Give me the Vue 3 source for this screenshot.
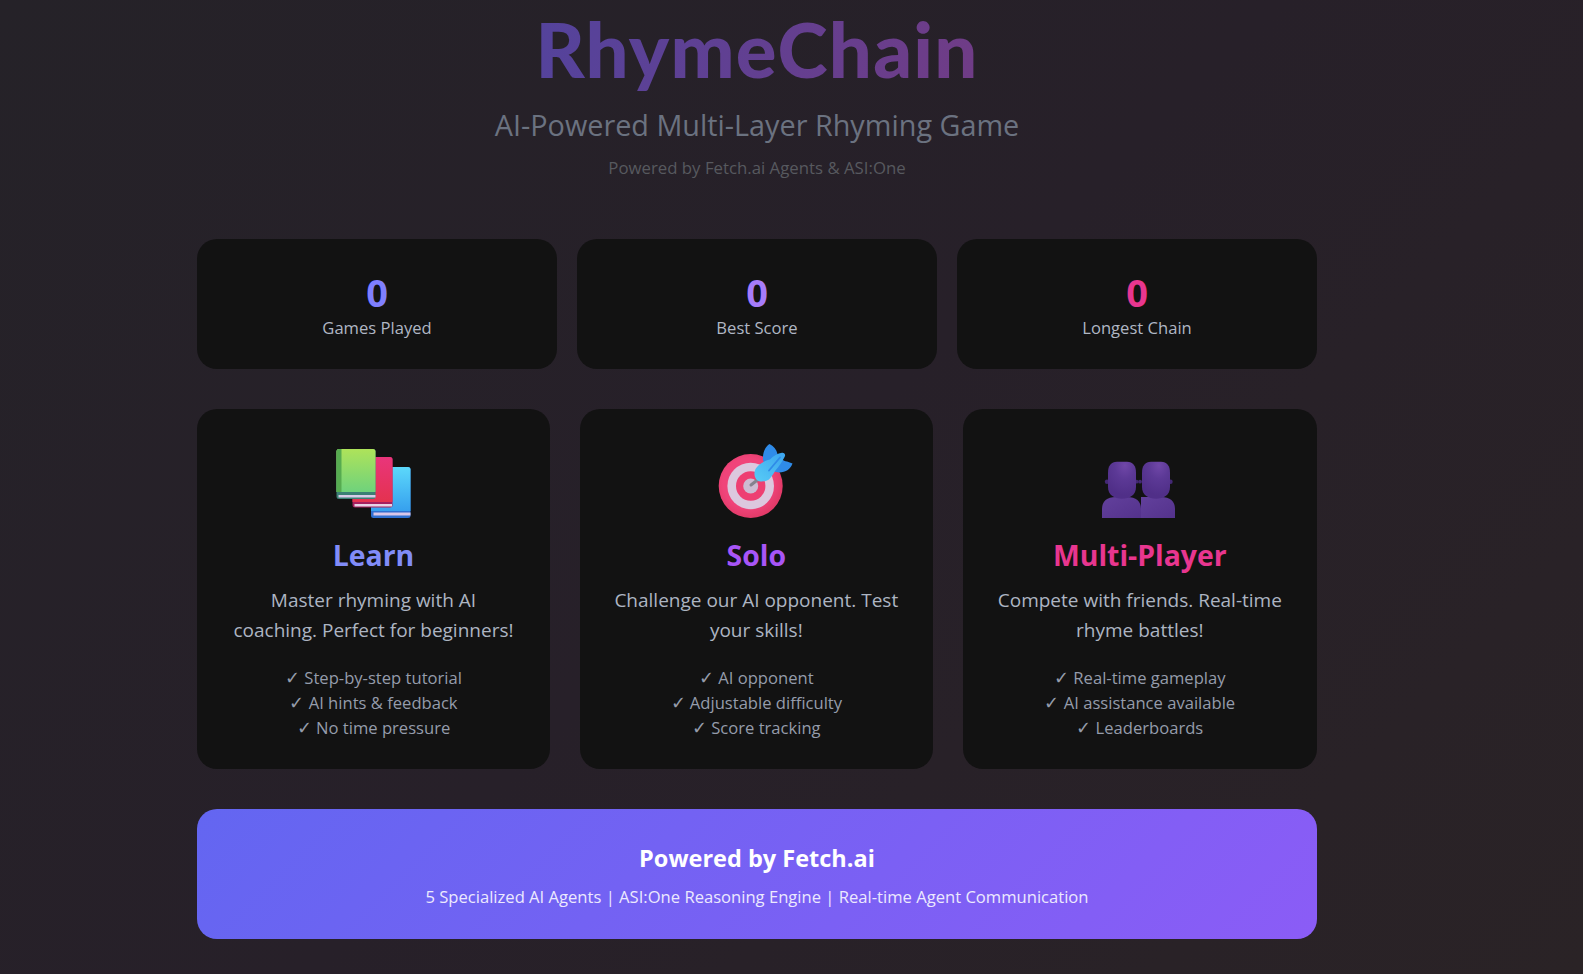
<template>
  <div class="page">
    <header class="hero">
      <h1 class="logo">RhymeChain</h1>
      <p class="tagline">AI-Powered Multi-Layer Rhyming Game</p>
      <p class="powered">Powered by Fetch.ai Agents &amp; ASI:One</p>
    </header>

    <section class="stats">
      <div v-for="stat in stats" :key="stat.label" class="stat-card">
        <div class="stat-value" :class="stat.color">0</div>
        <div class="stat-label">{{ stat.label }}</div>
      </div>
    </section>

    <section class="modes">
      <article class="mode-card">
        <svg class="mode-icon" viewBox="0 0 80 80">
          <defs>
            <linearGradient id="bookGreen" x1="0" y1="0" x2="0" y2="1">
              <stop offset="0" stop-color="#aee35a" />
              <stop offset="1" stop-color="#6fd27c" />
            </linearGradient>
            <linearGradient id="bookRed" x1="0" y1="0" x2="0" y2="1">
              <stop offset="0" stop-color="#e9357b" />
              <stop offset="1" stop-color="#e4324f" />
            </linearGradient>
            <linearGradient id="bookBlue" x1="0" y1="0" x2="0" y2="1">
              <stop offset="0" stop-color="#5cd8fb" />
              <stop offset="1" stop-color="#36a0ee" />
            </linearGradient>
          </defs>
          <!-- blue book -->
          <rect x="38" y="27" width="39.5" height="51" rx="2.5" fill="#2f6fd0" />
          <path d="M41 27h34a2.500 2.500 0 0 1 2.500 2.500V71H38V30a3 3 0 0 1 3-3z" fill="url(#bookBlue)" />
          <rect x="40.500" y="72.500" width="37" height="3" fill="#d9c6e8" />
          <!-- red book -->
          <rect x="19.500" y="17" width="40" height="50.500" rx="2.500" fill="#a5205f" />
          <path d="M22 17h35a2.500 2.500 0 0 1 2.500 2.500V62H19.500V20a3 3 0 0 1 3-3z" fill="url(#bookRed)" />
          <rect x="21.500" y="64" width="37.500" height="2.500" fill="#e6d3e6" />
          <!-- green book -->
          <rect x="3.500" y="9" width="39" height="50" rx="2.500" fill="#3b7f74" />
          <path d="M6 9h34a2.500 2.500 0 0 1 2.500 2.500V52H3.500V11.500a2.500 2.500 0 0 1 2.500-2.500z" fill="url(#bookGreen)" />
          <path d="M6 9h2.500v43H3.500V11.500A2.500 2.500 0 0 1 6 9z" fill="#56ab50" />
          <rect x="5.500" y="55" width="37" height="2.500" fill="#d9cbe8" />
        </svg>
        <h2 class="mode-title indigo">Learn</h2>
        <p class="mode-desc">Master rhyming with AI coaching. Perfect for beginners!</p>
        <ul class="mode-list">
          <li><span class="tick">✓</span> Step-by-step tutorial</li>
          <li><span class="tick">✓</span> AI hints &amp; feedback</li>
          <li><span class="tick">✓</span> No time pressure</li>
        </ul>
      </article>

      <article class="mode-card">
        <svg class="mode-icon" viewBox="0 0 80 80">
          <defs>
            <radialGradient id="targetRed" cx="0.45" cy="0.45" r="0.55">
              <stop offset="0.7" stop-color="#f0447a" />
              <stop offset="1" stop-color="#e23a68" />
            </radialGradient>
            <linearGradient id="dartBlue" x1="0" y1="1" x2="1" y2="0">
              <stop offset="0" stop-color="#58ccf6" />
              <stop offset="1" stop-color="#3ba4ee" />
            </linearGradient>
          </defs>
          <circle cx="34.700" cy="46" r="32" fill="url(#targetRed)" />
          <circle cx="34.700" cy="46" r="23.300" fill="#dcc8de" />
          <circle cx="34.700" cy="46" r="14.700" fill="#ee3f72" />
          <circle cx="34.700" cy="46" r="7.500" fill="#cdbbd2" />
          <path d="M35 45l7-5.500" stroke="#85818e" stroke-width="3" stroke-linecap="round" />
          <!-- flights -->
          <path d="M47 20C46.500 12 49.500 6.500 53.500 4 57.500 6 60.500 9.500 61.500 14 64 18 67 21 71 21.500L76.500 23.500C75 28.500 70 32.500 63 32.500 55 32 49 27 47 20z" fill="#2f8be8" />
          <!-- barrel -->
          <path d="M66 12.800C62 13.500 57 16 54 19.500 48 21 42 24.500 39.500 29 37.500 33 38.500 38 41 40 44 42.500 50 41.500 53 39.500 56 36 58 33 59 31 63 27 67 20 69 16 69.500 14 68 12.500 66 12.800z" fill="url(#dartBlue)" />
          <path d="M53 30.500L64 17.500" stroke="#2f8be8" stroke-width="1.800" stroke-linecap="round" />
        </svg>
        <h2 class="mode-title violet">Solo</h2>
        <p class="mode-desc">Challenge our AI opponent. Test your skills!</p>
        <ul class="mode-list">
          <li><span class="tick">✓</span> AI opponent</li>
          <li><span class="tick">✓</span> Adjustable difficulty</li>
          <li><span class="tick">✓</span> Score tracking</li>
        </ul>
      </article>

      <article class="mode-card">
        <svg class="mode-icon" viewBox="0 0 80 80">
          <defs>
            <linearGradient id="bustBody" x1="0" y1="0" x2="1" y2="1">
              <stop offset="0" stop-color="#62409c" />
              <stop offset="1" stop-color="#54328c" />
            </linearGradient>
            <radialGradient id="bustHead" cx="0.6" cy="0.1" r="0.8">
              <stop offset="0" stop-color="#7047a8" />
              <stop offset="0.45" stop-color="#5c3996" />
              <stop offset="1" stop-color="#502f88" />
            </radialGradient>
          </defs>
          <!-- right bust sits behind the left one -->
          <circle cx="40" cy="41.700" r="1.900" fill="#432874" />
          <circle cx="70.500" cy="41.700" r="2.200" fill="#432874" />
          <path d="M41 78V57H61C70 57 75 61 75 69V78z" fill="url(#bustBody)" />
          <path d="M51 21.700H61C67 21.700 70 25.700 70 32.700V47C70 55 64 58.700 56 58.700S42 55 42 47V32.700C42 25.700 45 21.700 51 21.700z" fill="url(#bustHead)" />
          <circle cx="7" cy="41.700" r="2.200" fill="#432874" />
          <circle cx="36.500" cy="41.700" r="1.900" fill="#432874" />
          <path d="M2 78V69C2 61 7 57 16 57H27C36 57 41 61 41 69V78z" fill="url(#bustBody)" />
          <path d="M17 21.700H27C33 21.700 36 25.700 36 32.700V47C36 55 30 58.700 22 58.700S8 55 8 47V32.700C8 25.700 11 21.700 17 21.700z" fill="url(#bustHead)" />
        </svg>
        <h2 class="mode-title pink">Multi-Player</h2>
        <p class="mode-desc">Compete with friends. Real-time rhyme battles!</p>
        <ul class="mode-list">
          <li><span class="tick">✓</span> Real-time gameplay</li>
          <li><span class="tick">✓</span> AI assistance available</li>
          <li><span class="tick">✓</span> Leaderboards</li>
        </ul>
      </article>
    </section>

    <section class="banner">
      <h3 class="banner-title">Powered by Fetch.ai</h3>
      <p class="banner-text">5 Specialized AI Agents | ASI:One Reasoning Engine | Real-time Agent Communication</p>
    </section>
  </div>
</template>

<script setup>
const stats = [
  { label: 'Games Played', color: 'indigo' },
  { label: 'Best Score', color: 'violet' },
  { label: 'Longest Chain', color: 'pink' },
];
</script>

<style>
html,
body {
  margin: 0;
}

body {
  background: linear-gradient(135deg, #252228 0%, #272029 50%, #2a2326 100%);
}
</style>

<style scoped>
.page {
  width: 1120px;
  height: 974px;
  overflow: hidden;
  margin-left: 197px;
  font-family: "Open Sans", "Noto Sans", sans-serif;
  color: #d1d5db;
}

.hero {
  text-align: center;
  height: 239px;
}

.logo {
  display: inline-block;
  margin: 0;
  padding-top: 1px;
  font-family: Lato, "Open Sans", sans-serif;
  font-size: 76px;
  line-height: 96px;
  font-weight: 900;
  letter-spacing: 1.2px;
  background: linear-gradient(100deg, #54439c, #703c86);
  -webkit-background-clip: text;
  background-clip: text;
  color: transparent;
}

.tagline {
  margin: 9px 0 0;
  font-size: 28.800px;
  line-height: 38px;
  color: #6b7280;
}

.powered {
  margin: 12px 0 0;
  font-size: 16.800px;
  line-height: 23px;
  color: #57595f;
}

.stats {
  display: grid;
  grid-template-columns: repeat(3, 1fr);
  gap: 20px;
  margin-bottom: 40px;
}

.stat-card {
  height: 130px;
  box-sizing: border-box;
  padding-top: 30px;
  background: #121212;
  border-radius: 20px;
  text-align: center;
}

.stat-value {
  font-size: 38px;
  line-height: 46px;
  font-weight: 700;
}

.stat-label {
  margin-top: 1px;
  font-size: 16.600px;
  line-height: 24px;
  color: #b0b7c4;
}

.indigo {
  color: #818cf8;
}

.violet {
  color: #a855f7;
}

.pink {
  color: #e8368f;
}

.stat-value.indigo {
  color: #7f7fff;
}

.stat-value.violet {
  color: #a67cfb;
}

.modes {
  display: grid;
  grid-template-columns: 353.3fr 353fr 354.7fr;
  gap: 30px;
  margin-bottom: 40px;
}

.mode-card {
  height: 360px;
  box-sizing: border-box;
  padding: 31px 30px 0;
  background: #121212;
  border-radius: 20px;
  text-align: center;
}

.mode-icon {
  display: block;
  width: 80px;
  height: 80px;
  margin: 0 auto;
}

.mode-title {
  margin: 16px 0 0;
  font-size: 28.400px;
  line-height: 38px;
  font-weight: 700;
}

.mode-desc {
  margin: 11px 0 0;
  font-size: 19px;
  line-height: 30px;
  color: #adb5c2;
}

.mode-list {
  list-style: none;
  margin: 20px 0 0;
  padding: 0;
  font-size: 16.600px;
  line-height: 25px;
  color: #959cab;
}

.tick {
  font-size: 18px;
  line-height: 1;
}

.banner {
  height: 130px;
  box-sizing: border-box;
  padding-top: 32px;
  border-radius: 20px;
  background: linear-gradient(135deg, #6366f1, #8b5cf6);
  text-align: center;
  color: #fff;
}

.banner-title {
  margin: 1px 0 0;
  font-size: 23.500px;
  line-height: 33px;
  font-weight: 700;
}

.banner-text {
  margin: 10px 0 0;
  font-size: 16.600px;
  line-height: 24px;
  color: #ece9fe;
}
</style>
